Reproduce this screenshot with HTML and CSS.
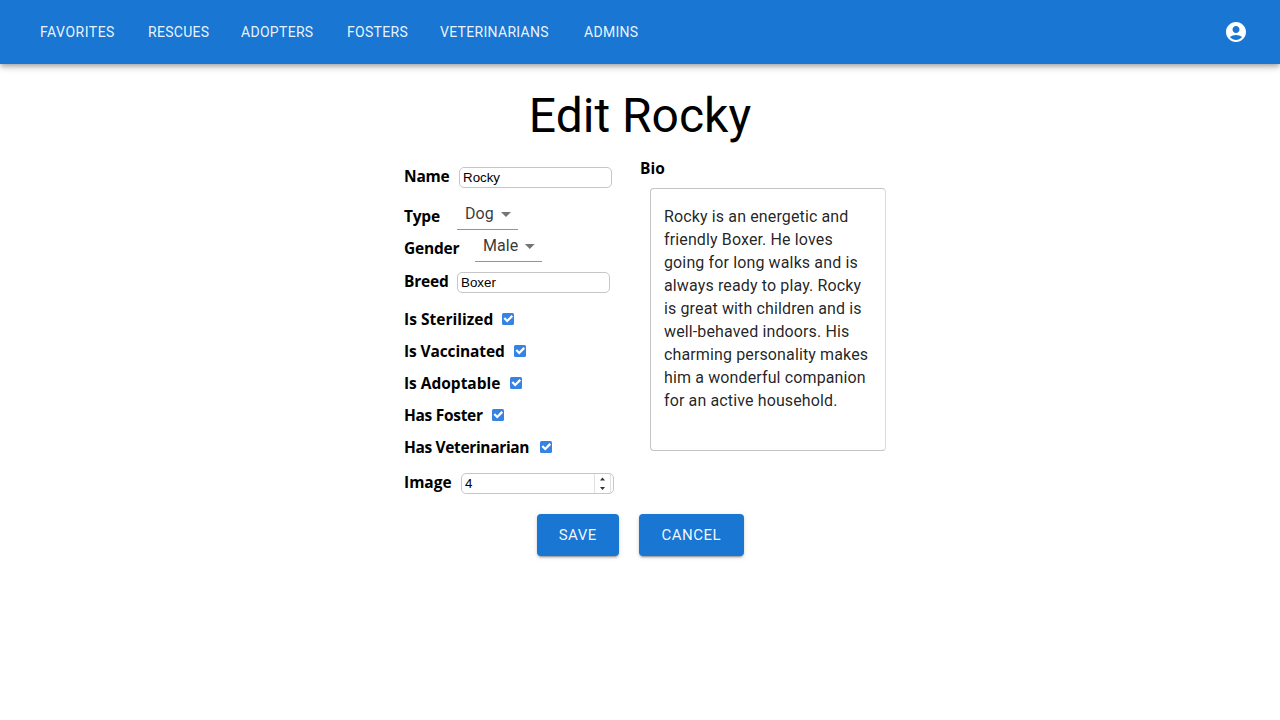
FILE: index.html
```html
<!DOCTYPE html>
<html lang="en">
<head>
<meta charset="utf-8">
<title>Edit Rocky</title>
<link rel="stylesheet" href="styles.css">
</head>
<body>
<header class="appbar">
  <nav class="nav">
    <a class="w-fav">Favorites</a><a class="w-res">Rescues</a><a class="w-ado">Adopters</a><a class="w-fos">Fosters</a><a class="w-vet">Veterinarians</a><a>Admins</a>
  </nav>
  <svg class="account" viewBox="0 0 24 24"><path fill="#fff" d="M12 2C6.48 2 2 6.48 2 12s4.48 10 10 10 10-4.480 10-10S17.520 2 12 2zm0 4c1.930 0 3.500 1.570 3.500 3.500S13.930 13 12 13s-3.500-1.570-3.500-3.500S10.070 6 12 6zm0 14c-2.030 0-4.430-.82-6.140-2.880C7.550 15.800 9.680 15 12 15s4.450.8 6.140 2.120C16.430 19.180 14.030 20 12 20z"/></svg>
</header>
<main>
  <h1 class="title">Edit Rocky</h1>
  <form class="form">
    <div class="fields">
      <div class="row row-name"><label class="l-name">Name</label><input class="text" value="Rocky"></div>
      <div class="row"><label class="l-type">Type</label><div class="select s-type"><span>Dog</span><svg viewBox="0 0 24 24"><path d="M7 10l5 5 5-5z"/></svg></div></div>
      <div class="row"><label class="l-gender">Gender</label><div class="select s-gender"><span>Male</span><svg viewBox="0 0 24 24"><path d="M7 10l5 5 5-5z"/></svg></div></div>
      <div class="row row-breed"><label class="l-breed">Breed</label><input class="text" value="Boxer"></div>
      <div class="row"><label class="l-ster">Is Sterilized</label><svg class="check" viewBox="0 0 12 12"><rect width="12" height="12" rx="1.500"/><path d="M2.300 5L5.200 8L10.300 2.900"/></svg></div>
      <div class="row"><label class="l-vacc">Is Vaccinated</label><svg class="check" viewBox="0 0 12 12"><rect width="12" height="12" rx="1.500"/><path d="M2.300 5L5.200 8L10.300 2.900"/></svg></div>
      <div class="row"><label class="l-adopt">Is Adoptable</label><svg class="check" viewBox="0 0 12 12"><rect width="12" height="12" rx="1.500"/><path d="M2.300 5L5.200 8L10.300 2.900"/></svg></div>
      <div class="row"><label class="l-foster">Has Foster</label><svg class="check" viewBox="0 0 12 12"><rect width="12" height="12" rx="1.500"/><path d="M2.300 5L5.200 8L10.300 2.900"/></svg></div>
      <div class="row"><label class="l-vet">Has Veterinarian</label><svg class="check" viewBox="0 0 12 12"><rect width="12" height="12" rx="1.500"/><path d="M2.300 5L5.200 8L10.300 2.900"/></svg></div>
      <div class="row row-image"><label class="l-image">Image</label><div class="text number"><span>4</span><svg class="spin" viewBox="0 0 17 19"><path class="spin-box" d="M.5 0V19M16.500 0V19"/><path d="M6 6.500L8.500 3.500L11 6.500zM6 13L8.500 16L11 13z"/></svg></div></div>
    </div>
    <div class="bio">
      <label>Bio</label>
      <div class="bio-box">Rocky is an energetic and friendly Boxer. He loves going for long walks and is always ready to play. Rocky is great with children and is well-behaved indoors. His charming personality makes him a wonderful companion for an active household.</div>
    </div>
  </form>
  <div class="actions"><button class="save">Save</button><button class="cancel">Cancel</button></div>
</main>
</body>
</html>
```
FILE: styles.css
```css
* { box-sizing: border-box; }
body { margin: 0; height: 720px; background: #fff; font-family: Roboto, sans-serif; color: #000; overflow: hidden; }
.appbar { height: 64px; padding: 0 32px 0 40px; background: #1976d2; display: flex; align-items: center; justify-content: space-between; box-shadow: 0 2px 4px -1px rgba(0,0,0,.2), 0 4px 5px 0 rgba(0,0,0,.14), 0 1px 10px 0 rgba(0,0,0,.12); }
.nav { display: flex; color: rgba(255,255,255,.93); font-size: 14px; font-weight: 400; line-height: 24px; letter-spacing: .3px; text-transform: uppercase; white-space: nowrap; }
.w-fav { width: 108px; letter-spacing: .5px; }
.w-res { width: 93px; }
.w-ado { width: 106px; }
.w-fos { width: 93px; }
.w-vet { width: 144px; }
.account { width: 24px; height: 24px; }
.title { margin: 24px 0 0; text-align: center; font-size: 48px; font-weight: 400; line-height: 56px; }
.form { display: flex; margin: 15px 0 0 404px; height: 339px; }
.fields { width: 236px; }
.row { display: flex; align-items: center; height: 32px; }
label { font: 700 15.500px/24px "Open Sans", sans-serif; letter-spacing: -.22px; white-space: nowrap; }
.row-name { height: 37px; margin-bottom: 4px; }
.row-breed { height: 37px; margin-bottom: 2px; }
.row-image { height: 41px; }
.text { width: 153px; height: 21px; border: 1px solid #c6c6c6; border-radius: 5px; padding: 1px 3px; background: #fff; color: #000; font: 13.333px "Liberation Sans", sans-serif; }
.l-name { width: 55px; padding-bottom: 3px; }
.l-type { width: 53px; padding-bottom: 1px; }
.l-gender { width: 71px; padding-bottom: 1px; }
.l-breed { width: 53px; padding-bottom: 3px; }
.l-ster { width: 98px; letter-spacing: .02px; }
.l-vacc { width: 110px; letter-spacing: -.12px; }
.l-adopt { width: 106px; letter-spacing: -.02px; }
.l-foster { width: 88px; letter-spacing: -.3px; }
.l-vet { width: 136px; letter-spacing: -.35px; }
.l-image { width: 57px; padding-bottom: 4px; letter-spacing: 0; }
.select { display: flex; align-items: center; height: 32px; margin-top: -4px; padding-left: 8px; border-bottom: 1px solid #949494; color: rgba(0,0,0,.8); font-size: 16px; letter-spacing: .1px; }
.select span { flex: 1; }
.select svg { width: 24px; height: 24px; fill: #757575; }
.s-type { width: 61px; }
.s-gender { width: 67px; }
.check { width: 12px; height: 12px; fill: #3584e4; }
.check path { fill: none; stroke: #fff; stroke-width: 2.200; }
.number { display: flex; justify-content: space-between; padding: 0 2px 0 3px; line-height: 19px; }
.spin { width: 17px; height: 19px; fill: #2e3436; }
.spin-box { stroke: #e0e0e0; fill: none; }
.bio { width: 246px; }
.bio label { display: block; height: 31px; margin-top: -3px; margin-bottom: 1px; letter-spacing: 0; }
.bio-box { width: 236px; height: 263px; margin-left: 10px; border: 1px solid #c4c4c4; border-right-color: #dcdcdc; border-radius: 4px; padding: 15.500px 12px 0 13px; font-size: 16px; line-height: 23px; letter-spacing: .13px; color: rgba(0,0,0,.87); }
.actions { display: flex; justify-content: center; gap: 20px; margin-top: 16px; }
.actions button { height: 42px; padding: 0; border: 0; border-radius: 4px; background: #1976d2; color: rgba(255,255,255,.95); font: 400 15px/26px Roboto, sans-serif; letter-spacing: .5px; text-transform: uppercase; box-shadow: 0 3px 1px -2px rgba(0,0,0,.2), 0 2px 2px 0 rgba(0,0,0,.14), 0 1px 5px 0 rgba(0,0,0,.12); }
.save { width: 82.500px; }
.cancel { width: 104.500px; }
```
